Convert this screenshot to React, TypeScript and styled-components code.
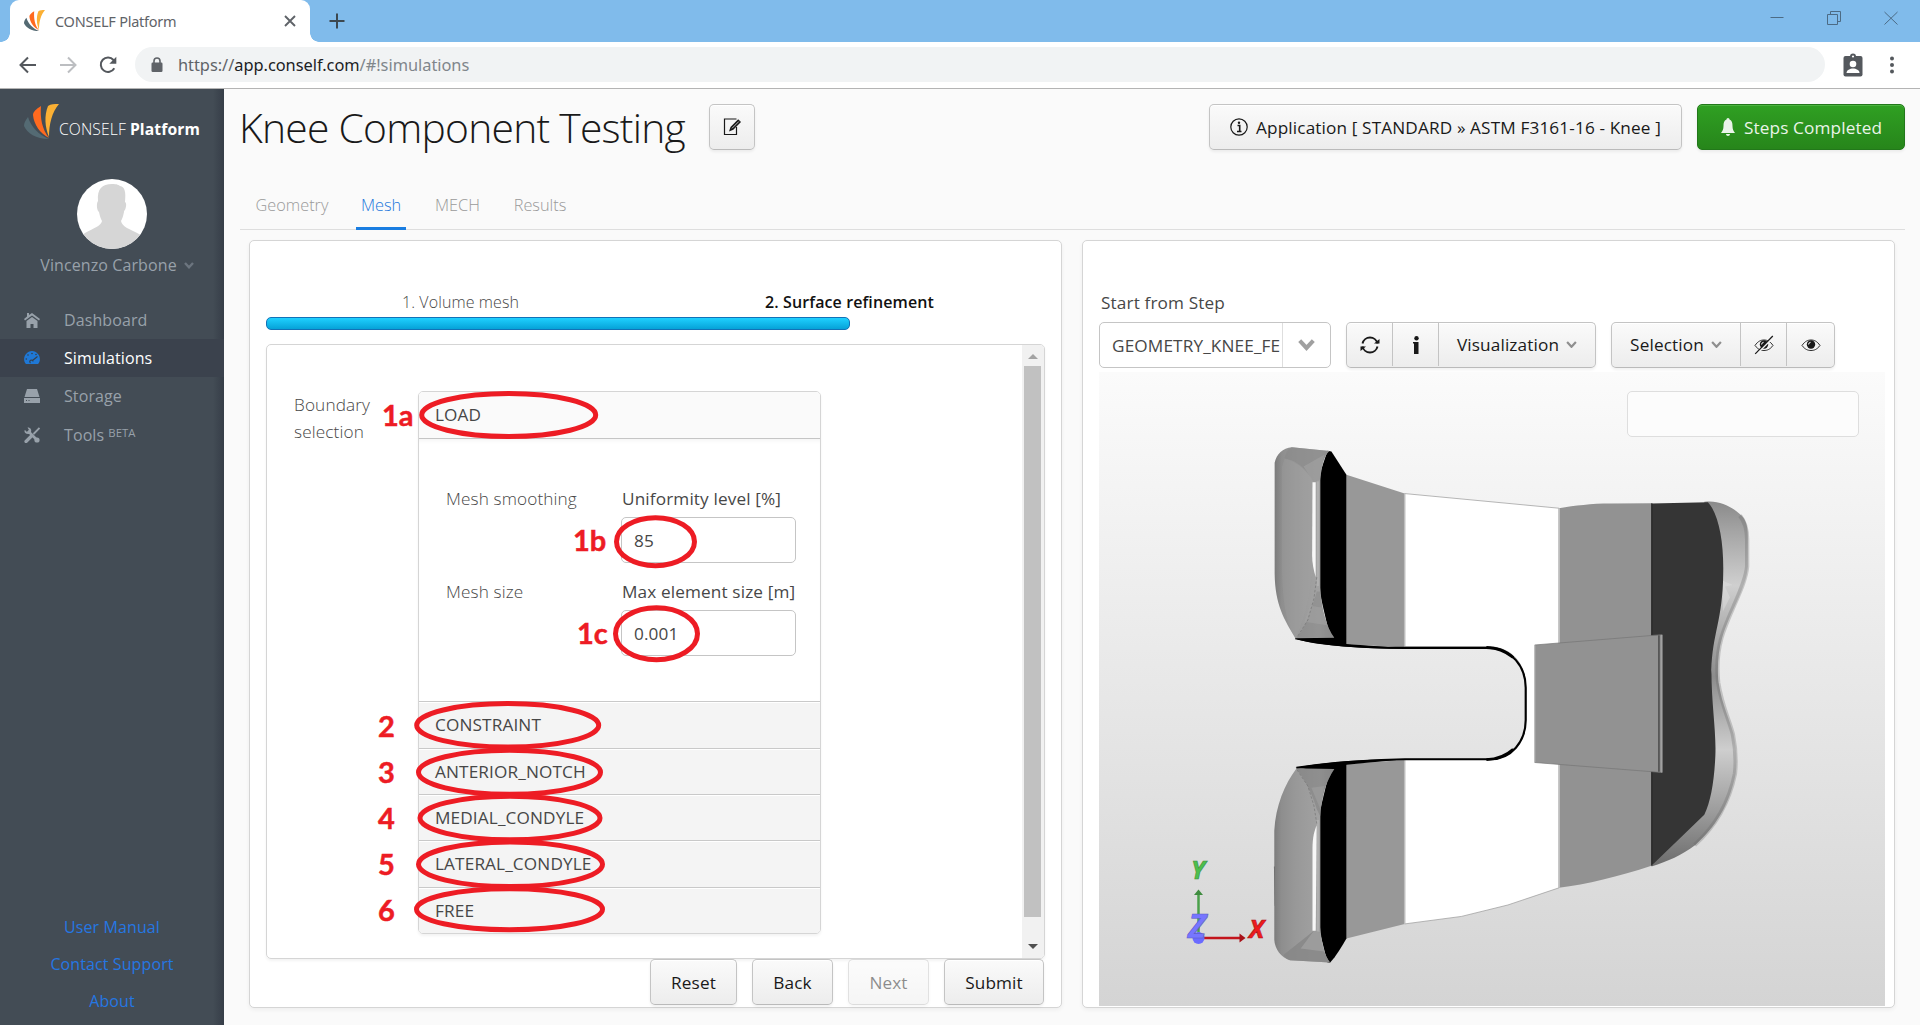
import React from "react";
import styled, { createGlobalStyle, css } from "styled-components";

const Global = createGlobalStyle`
  html, body { margin: 0; padding: 0; overflow: hidden; }
  * { box-sizing: border-box; }
  body { font-family: "Open Sans", "Noto Sans", sans-serif; font-size: 16px; color: #474747; background: #fafafa; }
`;

const Window = styled.div`
  position: relative;
  display: flex;
  flex-direction: column;
  width: 1920px;
  height: 1025px;
  overflow: hidden;
`;

/* ---------- browser chrome ---------- */
const TitleBar = styled.div`
  display: flex;
  align-items: stretch;
  height: 42px;
  padding-left: 10px;
  background: #80bbeb;
`;
const BrowserTab = styled.div`
  position: relative;
  display: flex;
  align-items: center;
  width: 300px;
  padding: 0 14px 1px 14px;
  background: #fff;
  border-radius: 9px 9px 0 0;
  &::before, &::after {
    content: "";
    position: absolute;
    bottom: 0;
    width: 9px;
    height: 9px;
  }
  &::before { left: -9px; background: radial-gradient(circle at 0 0, transparent 8.5px, #fff 9px); }
  &::after { right: -9px; background: radial-gradient(circle at 100% 0, transparent 8.5px, #fff 9px); }
`;
const TabTitle = styled.span`
  flex: 1;
  margin-left: 10px;
  font-family: "Noto Sans", sans-serif;
  font-size: 14.5px;
  letter-spacing: -0.25px;
  color: #5f6368;
`;
const NewTab = styled.div`
  display: flex;
  align-items: center;
  margin-left: 19px;
`;
const WindowButtons = styled.div`
  display: flex;
  align-items: flex-start;
  gap: 43px;
  margin-left: auto;
  padding: 11px 22px 0 0;
`;
const Toolbar = styled.div`
  display: flex;
  align-items: center;
  height: 47px;
  padding: 0 21px 1px 18px;
  background: #fff;
  border-bottom: 1px solid #b4b4b4;
`;
const NavIcons = styled.div`
  display: flex;
  gap: 20px;
  width: 117px;
  align-items: center;
`;
const Omnibox = styled.div`
  display: flex;
  align-items: center;
  flex: 1;
  height: 35px;
  margin-right: 18px;
  padding-left: 16px;
  background: #f1f3f4;
  border-radius: 18px;
  font-family: "Noto Sans", sans-serif;
  font-size: 16.4px;
  letter-spacing: -0.03px;
  color: #80868b;
`;
const Url = styled.span`margin-left: 15px;`;
const UrlPart = styled.span<{ $c: string }>`color: ${(p) => p.$c};`;
const MenuGap = styled.span`display: flex; margin-left: 22px;`;

/* ---------- sidebar ---------- */
const Body = styled.div`
  display: flex;
  flex: 1;
  min-height: 0;
`;
const Sidebar = styled.aside`
  display: flex;
  flex-direction: column;
  width: 224px;
  padding-top: 15px;
  background: linear-gradient(to right, transparent 213px, rgba(45, 52, 63, 0.6) 224px), #434c55;
  color: #98a1aa;
  letter-spacing: 0.1px;
`;
const Brand = styled.div`
  display: flex;
  height: 75px;
  padding-left: 24px;
  color: #fff;
  font-size: 15.7px;
  line-height: 50px;
  white-space: nowrap;
`;
const BrandLight = styled.span`font-weight: 300; margin-right: 4px;`;
const BrandBold = styled.b`font-weight: 700;`;
const Avatar = styled.div`
  width: 70px;
  height: 70px;
  margin: 0 auto;
  border-radius: 50%;
  background: #fff;
  overflow: hidden;
`;
const UserName = styled.div`
  display: flex;
  align-items: center;
  justify-content: center;
  gap: 7px;
  height: 32px;
  margin-bottom: 20px;
  padding-left: 10px;
  font-size: 16px;
`;
const NavItem = styled.div<{ $active?: boolean }>`
  display: flex;
  align-items: center;
  height: ${(p) => (p.$active ? 38 : 38.3)}px;
  padding-left: 24px;
  font-size: 16px;
  color: ${(p) => (p.$active ? "#fff" : "#98a1aa")};
  background: ${(p) => (p.$active ? "#3b424d" : "transparent")};
`;
const NavIcon = styled.span`
  display: flex;
  align-items: center;
  width: 40px;
`;
const Beta = styled.sup`
  margin: -5px 0 0 4px;
  font-size: 11.3px;
  line-height: 1;
`;
const Links = styled.div`
  display: flex;
  flex-direction: column;
  align-items: center;
  margin-top: auto;
  padding-bottom: 5px;
  font-size: 16px;
  line-height: 37px;
  color: #2577e3;
`;

/* ---------- main ---------- */
const Main = styled.main`
  display: flex;
  flex-direction: column;
  flex: 1;
  background: #fafafa;
`;
const Header = styled.header`
  display: flex;
  align-items: center;
  height: 46px;
  margin: 15px 15px 0 15px;
`;
const Title = styled.h1`
  width: 446px;
  margin: 0 24px 0 0;
  font-size: 40.8px;
  font-weight: 300;
  line-height: 47px;
  letter-spacing: -0.75px;
  color: #191919;
  white-space: nowrap;
`;
const raised = css`
  background: linear-gradient(#fafafa 2%, #ededed 98%);
  border: 1px solid #c4c4c4;
  border-bottom-color: #bababa;
  box-shadow: inset 0 1px 0 #fff, 0 2px 3px rgba(0, 0, 0, 0.06);
`;
const formText = css`
  font-size: 17.2px;
  letter-spacing: 0.13px;
`;
const Button = styled.button<{ $w: number; $green?: boolean; $off?: boolean }>`
  display: flex;
  align-items: center;
  justify-content: center;
  gap: 8px;
  flex: none;
  width: ${(p) => p.$w}px;
  height: 46px;
  padding: 0;
  border-radius: 5px;
  font-family: "Open Sans", sans-serif;
  ${formText}
  white-space: nowrap;
  color: #191919;
  ${raised}
  ${(p) => p.$green && css`
    color: #eaf4e9;
    background: linear-gradient(#2f9f22 2%, #27861b 98%);
    border-color: #22781a;
    box-shadow: inset 0 1px 0 #4cb340, 0 2px 3px rgba(0, 0, 0, 0.06);
  `}
  ${(p) => p.$off && "opacity: 0.5;"}
`;
const Spacer = styled.div`flex: 1;`;
const HeadActions = styled.div`display: flex; gap: 15px;`;
const Tabs = styled.nav`
  display: flex;
  height: 56px;
  margin: 24px 15px 0 16px;
  border-bottom: 1px solid #dedede;
  padding: 0 0 0 8px;
`;
const Tab = styled.div<{ $w: number; $active?: boolean }>`
  display: flex;
  justify-content: center;
  width: ${(p) => p.$w}px;
  height: 56px;
  margin-right: 20px;
  font-size: 16.3px;
  font-weight: 300;
  line-height: 62px;
  color: ${(p) => (p.$active ? "#2377dc" : "#999")};
  border-bottom: 3px solid ${(p) => (p.$active ? "#197de1" : "transparent")};
`;
const Columns = styled.div`
  display: flex;
  gap: 20px;
  flex: none;
  margin: 10px 25px 0;
`;
const Card = styled.section`
  display: flex;
  flex-direction: column;
  flex: 1;
  height: 768px;
  background: #fff;
  border: 1px solid #d5d5d5;
  border-radius: 5px;
  box-shadow: 0 2px 4px rgba(0, 0, 0, 0.05);
`;
const Steps = styled.div`
  display: grid;
  grid-template-columns: 1fr 1fr;
  margin: 46px 17px 0 16px;
  line-height: 30px;
  text-align: center;
  font-size: 16px;
  letter-spacing: 0.1px;
`;
const Step = styled.span<{ $active?: boolean }>`
  font-weight: ${(p) => (p.$active ? 600 : 300)};
  color: ${(p) => (p.$active ? "#111" : "#474747")};
`;
const Progress = styled.div`
  width: 584px;
  height: 13px;
  margin: 0 0 14px 16px;
  border: 1px solid #1272b8;
  border-radius: 5px;
  background: linear-gradient(#1fd0ff, #06a2d8);
`;
const ScrollPanel = styled.div`
  display: flex;
  width: 779px;
  height: 615px;
  margin-left: 16px;
  border: 1px solid #d5d5d5;
  border-radius: 5px;
  box-shadow: 0 2px 3px rgba(0, 0, 0, 0.05);
  overflow: hidden;
`;
const FormArea = styled.div`
  display: flex;
  flex: 1;
  padding: 46px 0 0 27px;
`;
const FormCaption = styled.div`
  width: 124px;
  ${formText}
  font-weight: 300;
  line-height: 27px;
`;
const Scrollbar = styled.div`
  display: flex;
  flex-direction: column;
  align-items: center;
  width: 22px;
  padding-right: 1px;
  background: #f1f1f1;
`;
const ScrollArrow = styled.span<{ $down?: boolean }>`
  width: 0;
  height: 0;
  border: 5px solid transparent;
  ${(p) => p.$down
    ? css`border-top-color: #505050; border-bottom: 0; margin-top: 27px;`
    : css`border-bottom-color: #a3a3a3; border-top: 0; margin: 9px 0 7px;`}
`;
const ScrollThumb = styled.div`
  width: 17px;
  height: 551px;
  background: #c1c1c1;
`;
const Accordion = styled.div`
  width: 403px;
  height: 543px;
  border: 1px solid #d5d5d5;
  border-radius: 5px;
  box-shadow: 0 2px 3px rgba(0, 0, 0, 0.05);
  overflow: hidden;
`;
const AccHead = styled.div<{ $h: number; $open?: boolean }>`
  height: ${(p) => p.$h}px;
  padding: 0 0 0 16px;
  ${formText}
  line-height: 45px;
  ${(p) => p.$open
    ? css`background: #fafafa; border-bottom: 1px solid #c5c5c5; line-height: 46px;`
    : css`background: #f4f4f4; border-top: 1px solid #c9c9c9; box-shadow: inset 0 1px 0 #fff;`}
`;
const AccBody = styled.div`
  display: grid;
  grid-template-columns: 175px 175px;
  grid-auto-rows: 93px;
  height: 262px;
  padding: 44px 0 0 27px;
  box-shadow: inset 0 4px 5px -3px rgba(0, 0, 0, 0.06);
`;
const FieldName = styled.div`
  ${formText}
  font-weight: 300;
  line-height: 31px;
`;
const FieldLabel = styled.div`
  padding-left: 1px;
  ${formText}
  line-height: 31px;
  white-space: nowrap;
`;
const Input = styled.div`
  height: 46px;
  margin-top: 3px;
  padding-left: 12px;
  border: 1px solid #c5c5c5;
  border-radius: 5px;
  ${formText}
  line-height: 45px;
`;
const Actions = styled.div`
  display: flex;
  justify-content: flex-end;
  gap: 15px;
  padding-right: 17px;
`;

/* ---------- viewer ---------- */
const ViewerLabel = styled.div`
  margin: 46px 0 3px 18px;
  ${formText}
  line-height: 32px;
`;
const ViewerTools = styled.div`
  display: flex;
  margin-left: 16px;
  height: 50px;
`;
const Combo = styled.div`
  display: flex;
  width: 232px;
  height: 46px;
  margin-right: 15px;
  padding-left: 12px;
  border: 1px solid #c5c5c5;
  border-radius: 5px;
  ${formText}
  line-height: 45px;
  background: #fff;
`;
const ComboText = styled.span`
  width: 171px;
  overflow: hidden;
  white-space: nowrap;
  border-right: 1px solid #dedede;
`;
const ComboArrow = styled.span`
  display: flex;
  flex: 1;
  align-items: center;
  justify-content: center;
`;
const Group = styled.div`
  display: flex;
  height: 46px;
  margin-right: 15px;
  padding-bottom: 1px;
  border-radius: 5px;
  ${raised}
`;
const GroupItem = styled.div<{ $w: number }>`
  display: flex;
  align-items: center;
  justify-content: center;
  gap: 7px;
  width: ${(p) => p.$w}px;
  ${formText}
  color: #191919;
  & + & { border-left: 1px solid #c4c4c4; }
`;
const Canvas = styled.div`
  position: relative;
  width: 786px;
  height: 634px;
  margin-left: 16px;
  background: linear-gradient(#fbfbfb, #d4d4d4);
`;
const Scene = styled.svg`
  display: block;
`;
const InfoBox = styled.div`
  position: absolute;
  left: 528px;
  top: 19px;
  width: 232px;
  height: 46px;
  border: 1px solid #dedede;
  border-radius: 5px;
  background: #fcfcfc;
`;
const Markup = styled.svg`
  position: absolute;
  left: 0;
  top: 0;
  pointer-events: none;
`;

const Logo = ({ size }: { size: number }) => (
  <svg width={size} height={size} viewBox="0 0 35 35">
    <path d="M4 13C1 17 0 19 0 22c3 7 12 13 25 13C15 31 7 23 4 13Z" fill="#546a73" />
    <path d="M17 2C12 5 9 8 9 11c1 10 7 18 16 23-7-9-9-20-8-32Z" fill="#ff6a1f" />
    <path d="M35 0c-5 0-8 0-11 2-4 10-3 21 1 31 0-13 3-25 10-33Z" fill="#fbb034" />
  </svg>
);

const Chevron = ({ s = 10, c = "#8f8f8f", w = 2.4 }: { s?: number; c?: string; w?: number }) => (
  <svg width={s} height={s * 0.7} viewBox="0 0 10 7">
    <path d="M1 1l4 4.3L9 1" fill="none" stroke={c} strokeWidth={w} />
  </svg>
);

const Eye = ({ off }: { off?: boolean }) => (
  <svg width="20" height="20" viewBox="0 0 20 20">
    <path d="M1 10.5C4 6 7 5 10 5s6 1 9 5.500C16 14.500 13 15.500 10 15.500S4 14.500 1 10.500Z" fill="none" stroke="#191919" strokeWidth="0.900" />
    <circle cx="10" cy="9.500" r="4.200" fill="#191919" />
    <path d="M7.600 9.500a2.200 2.200 0 0 1 2-2.200" stroke="#fff" strokeWidth="1" fill="none" />
    {off && (
      <>
        <path d="M2.200 19.600L19.800 1.800" stroke="#f4f4f4" strokeWidth="1.500" />
        <path d="M1.200 18.800L18.800 1" stroke="#191919" strokeWidth="1.200" />
      </>
    )}
  </svg>
);

const RINGS = [
  [508.7, 415, 87, 21.5],
  [655.5, 541.7, 39, 24],
  [656.5, 633.7, 41, 26],
  [507.7, 725.3, 91, 21.7],
  [509.5, 772.3, 91, 22],
  [510, 818, 90, 21.7],
  [510.5, 864.3, 92, 22.3],
  [509.5, 909.3, 93, 20.5],
];
const NOTES: [string, number, number][] = [
  ["1a", 382, 426], ["1b", 573, 551], ["1c", 577, 644],
  ["2", 378, 737], ["3", 378, 783], ["4", 378, 829], ["5", 378, 875], ["6", 378, 921],
];

const Knee = () => (
  <g transform="translate(141 48) scale(0.35714)">
    <defs>
      <linearGradient id="pad" x1="0" x2="1">
        <stop offset="0" stopColor="#7c7c7c" />
        <stop offset="0.120" stopColor="#8e8e8e" />
        <stop offset="0.350" stopColor="#989898" />
        <stop offset="0.750" stopColor="#a2a2a2" />
        <stop offset="1" stopColor="#939393" />
      </linearGradient>
      <linearGradient id="rim" x1="0" x2="0" y1="0" y2="1">
        <stop offset="0" stopColor="#8a8a8a" />
        <stop offset="0.080" stopColor="#a4a4a4" />
        <stop offset="0.230" stopColor="#cfcfcf" />
        <stop offset="0.330" stopColor="#b4b4b4" />
        <stop offset="0.480" stopColor="#8c8c8c" />
        <stop offset="0.680" stopColor="#cecece" />
        <stop offset="0.850" stopColor="#9c9c9c" />
        <stop offset="1" stopColor="#6c6c6c" />
      </linearGradient>
    </defs>
    <path d="M1300 229C1345 223 1380 245 1405 268C1420 285 1422 305 1422 330V410C1418 470 1370 540 1350 610C1338 650 1336 700 1340 735C1350 800 1372 840 1382 880C1390 920 1392 950 1388 990C1370 1080 1330 1140 1275 1190C1235 1220 1200 1235 1152 1250L1290 1000L1320 700Z" fill="url(#rim)" />
    <path d="M1400 268C1418 290 1420 320 1420 335V410C1416 465 1368 540 1348 610C1337 650 1335 700 1339 735C1349 800 1370 840 1380 880C1388 920 1390 950 1386 990C1368 1080 1328 1140 1273 1190" fill="none" stroke="#666" strokeWidth="12" opacity="0.300" />
    <path d="M1352 450l28 12-22 4 14 30-20 40Z" fill="#ddd" opacity="0.500" />
    <path d="M461 206L893 247V1310L750 1358 620 1390 461 1411V950H700C760 945 800 900 800 845V745C798 680 760 637 700 635H461Z" fill="#fff" stroke="#999" strokeWidth="2" />
    <path d="M298 153L461 206V637L298 628Z M298 963L461 952V1411L298 1452Z" fill="#989898" />
    <path d="M893 247C940 240 980 234 1040 234L1152 233V1248C1060 1278 970 1300 893 1310Z" fill="#929292" />
    <path d="M461 206V636M461 952V1411M894 247V1310" stroke="#bdbdbd" strokeWidth="4" />
    <path d="M1152 234L1310 230C1340 262 1355 340 1353 430C1352 560 1322 600 1320 700C1320 800 1334 870 1331 940C1328 1010 1318 1070 1300 1105L1152 1248Z" fill="#353535" />
    <path d="M1153 233V1248" stroke="#202020" strokeWidth="3" />
    <path d="M825 630L1182 601V987L825 959Z" fill="#929292" />
    <path d="M825 630L1182 601V987L825 959" fill="none" stroke="#777" strokeWidth="2" />
    <path d="M1173 603V985" stroke="#555" strokeWidth="5" />
    <path d="M826 631V958M1181 602V987" stroke="#aaa" strokeWidth="3" />
    <path d="M155 611C260 634 360 638 461 638H700C760 640 800 690 800 750V840C800 900 760 950 700 950H461C360 952 250 960 158 974" fill="none" stroke="#000" strokeWidth="6" />
    <path d="M155 611L250 600 298 627 470 640C350 642 190 630 155 611ZM155 974C240 957 340 950 470 949L298 965 250 985Z" fill="#000" />
    <path d="M690 637C720 637 745 648 765 665M690 951C720 950 745 940 765 922" stroke="#000" strokeWidth="8" fill="none" />
    <path d="M245 86L256 88L298 153V630L255 620L220 470V160Z" fill="#000" />
    <path d="M255 965L298 962V1452C285 1475 270 1500 252 1520L245 1519L220 1420V1110Z" fill="#000" />
    <path d="M145 76L250 87C234 100 226 140 225 170V470C228 530 242 580 264 610L155 611C125 560 98 520 97 430V120C102 95 120 78 145 76Z" fill="url(#pad)" />
    <path d="M145 76L250 87C234 100 227 130 224 165L207 174C190 148 170 120 125 108C128 90 135 80 145 76Z" fill="#8a8a8a" opacity="0.700" />
    <path d="M207 174L178 130 236 97 224 165Z" fill="#a4a4a4" opacity="0.600" />
    <path d="M125 108C160 112 190 140 207 174V390C195 480 190 540 155 611C125 560 120 500 118 430V130Z" fill="#a2a2a2" opacity="0.300" />
    <path d="M225 480C228 535 242 580 264 610H158C180 585 195 550 215 480Z" fill="#777" opacity="0.350" />
    <path d="M196 520L229 525 244 575 180 565Z" fill="#a2a2a2" opacity="0.600" />
    <path d="M203 174H212V440C206 420 202 400 202 380Z" fill="#f7f7f7" />
    <path d="M218 172V465" stroke="#b4b4b4" strokeWidth="6" opacity="0.800" />
    <path d="M215 440L207 500 190 560 160 608" fill="none" stroke="#777" strokeWidth="2" strokeDasharray="7 5" />
    <path d="M95 1250H100V1360H97Z" fill="#555" />
    <path d="M158 976L264 977C242 1010 228 1050 225 1110V1420C228 1470 238 1500 252 1519L140 1513C115 1505 97 1480 96 1455V1150C100 1080 125 1020 158 976Z" fill="url(#pad)" />
    <path d="M252 1519L140 1513C125 1505 118 1500 125 1495L207 1430 224 1435C227 1470 238 1500 252 1519Z" fill="#868686" opacity="0.800" />
    <path d="M207 1430L170 1480 236 1488 224 1435Z" fill="#a4a4a4" opacity="0.700" />
    <path d="M158 976L264 977C242 1010 228 1050 225 1110L215 1090C200 1040 180 1005 158 976Z" fill="#727272" opacity="0.400" />
    <path d="M200 1030L236 1025 225 1090Z" fill="#a0a0a0" opacity="0.600" />
    <path d="M215 1135L212 1430H203V1200C203 1170 208 1150 215 1135Z" fill="#f7f7f7" />
    <path d="M218 1120V1432" stroke="#b4b4b4" strokeWidth="6" opacity="0.800" />
    <path d="M160 980L190 1025 207 1080 215 1130" fill="none" stroke="#777" strokeWidth="2" strokeDasharray="7 5" />
  </g>
);

const Triad = styled.text<{ $s?: number }>`
  font-family: "Open Sans", sans-serif;
  font-weight: 700;
  font-style: italic;
  font-size: ${(p) => p.$s ?? 25}px;
  stroke-width: 0.6px;
`;

const MarkupText = styled.text`
  font-family: Lato, sans-serif;
  font-weight: 700;
  font-size: 29px;
  fill: #ed1c24;
  stroke: #ed1c24;
  stroke-width: 0.5px;
`;

export default function App() {
  return (
    <Window>
      <Global />
      <TitleBar>
        <BrowserTab>
          <Logo size={21} />
          <TabTitle>CONSELF Platform</TabTitle>
          <svg width="12" height="12" viewBox="0 0 12 12"><path d="M1 1l10 10M11 1L1 11" stroke="#5f6368" strokeWidth="1.900" /></svg>
        </BrowserTab>
        <NewTab>
          <svg width="16" height="16" viewBox="0 0 16 16"><path d="M8 0.500v15M0.500 8h15" stroke="#3c4850" strokeWidth="2" /></svg>
        </NewTab>
        <WindowButtons>
          <svg width="14" height="14"><path d="M0.500 6.500h13" stroke="#4c6b85" /></svg>
          <svg width="14" height="14"><path d="M0.500 3.500h10v10h-10zM3.500 3.500v-3h10v10h-3" fill="none" stroke="#4c6b85" /></svg>
          <svg width="14" height="14"><path d="M0.500 1l13 12.500M13.500 1l-13 12.500" stroke="#4c6b85" /></svg>
        </WindowButtons>
      </TitleBar>
      <Toolbar>
        <NavIcons>
          <svg width="20" height="20" viewBox="0 0 20 20"><path d="M18 10H3M10 2.500L2.500 10l7.500 7.500" fill="none" stroke="#54585d" strokeWidth="2" /></svg>
          <svg width="20" height="20" viewBox="0 0 20 20"><path d="M2 10h15M10 2.500l7.500 7.500-7.500 7.500" fill="none" stroke="#bcbec1" strokeWidth="2" /></svg>
          <svg width="20" height="20" viewBox="0 0 20 20"><path d="M16.300 13.200A7.200 7.200 0 1 1 15.500 5l2 2" fill="none" stroke="#54585d" strokeWidth="2" /><path d="M18.300 1.800v7h-7z" fill="#54585d" /></svg>
        </NavIcons>
        <Omnibox>
          <svg width="12" height="16" viewBox="0 0 12 16"><rect x="0.500" y="5.500" width="11" height="9.500" rx="1.200" fill="#5f6368" /><path d="M3 6V4a3 3 0 0 1 6 0v2" fill="none" stroke="#5f6368" strokeWidth="1.600" /></svg>
          <Url>
            <UrlPart $c="#5f6368">https://</UrlPart><UrlPart $c="#202124">app.conself.com</UrlPart><UrlPart $c="#80868b">/#!simulations</UrlPart>
          </Url>
        </Omnibox>
        <svg width="20" height="24" viewBox="0 0 20 24">
          <rect x="0.500" y="3" width="19" height="20.500" rx="2" fill="#54585d" />
          <circle cx="10" cy="3.500" r="3" fill="#54585d" /><circle cx="10" cy="3.500" r="1.100" fill="#fff" />
          <circle cx="10" cy="11" r="3.300" fill="#fff" /><path d="M3.500 20c0-3 3.500-4.500 6.500-4.500s6.500 1.500 6.500 4.500z" fill="#fff" />
        </svg>
        <MenuGap>
          <svg width="14" height="18" viewBox="0 0 14 18"><g fill="#54585d"><circle cx="7" cy="2.500" r="2" /><circle cx="7" cy="9" r="2" /><circle cx="7" cy="15.500" r="2" /></g></svg>
        </MenuGap>
      </Toolbar>
      <Body>
        <Sidebar>
          <Brand>
            <Logo size={35} />
            <BrandLight>CONSELF</BrandLight>
            <BrandBold>Platform</BrandBold>
          </Brand>
          <Avatar>
            <svg width="70" height="70" viewBox="0 0 70 70">
              <path d="M21 22C20 10 25 5 35 5c5 0 7 1 8 2 5 1 6 6 5 16 2 1 1 6 0 8-1 1-1 1-1 2-1 5-2 7-3 9 1 6 9 8 18 13l8 5v10H0V60l8-6c9-5 16-7 17-12-1-2-2-4-3-9-2-1-3-8-1-11Z" fill="#d6d6d6" />
            </svg>
          </Avatar>
          <UserName>Vincenzo Carbone <Chevron c="#6c757f" /></UserName>
          <NavItem>
            <NavIcon>
              <svg width="16" height="15" viewBox="0 0 16 15"><path d="M3 0h2v2L8 0l8 6-1 1.500L8 2.500 1 7.500 0 6l3-2.500z" fill="#98a1aa" /><path d="M2.500 8L8 4l5.500 4v7H9.500v-4h-3v4h-4z" fill="#98a1aa" /></svg>
            </NavIcon>
            Dashboard
          </NavItem>
          <NavItem $active>
            <NavIcon>
              <svg width="16" height="14" viewBox="0 0 16 14"><path d="M2 13C-1 10 0 5 2 3c3-4 9-4 12 0 2 2 3 7 0 10z" fill="#1f78d6" /><path d="M6.500 12a1.600 1.600 0 1 1 2.500-1.500M8.500 9.500L13.500 5.500" stroke="#36404c" strokeWidth="1.200" fill="none" /><g fill="#36404c"><circle cx="8" cy="2.500" r="0.800" /><circle cx="4" cy="4" r="0.800" /><circle cx="12" cy="3.500" r="0.800" /><circle cx="2.300" cy="8" r="0.800" /></g></svg>
            </NavIcon>
            Simulations
          </NavItem>
          <NavItem>
            <NavIcon>
              <svg width="16" height="14" viewBox="0 0 16 14"><path d="M3 0h10l2.500 8H0.500z" fill="#98a1aa" /><path d="M0 9h16v5H0z" fill="#98a1aa" /><path d="M2 11.500h1M4.500 11.500h1" stroke="#434c55" /></svg>
            </NavIcon>
            Storage
          </NavItem>
          <NavItem>
            <NavIcon>
              <svg width="16" height="16" viewBox="0 0 16 16"><path d="M4 4l8.500 8.500" stroke="#98a1aa" strokeWidth="2.600" /><circle cx="13" cy="13" r="2.600" fill="#98a1aa" /><path d="M1 3l2 2 2-2L3.500 0.500C6 0 8 2.500 7 5L5 7C2.500 7.500 0 6 0.500 3.500z" fill="#98a1aa" /><path d="M15.500 1L9.500 7" stroke="#98a1aa" strokeWidth="1.800" /><path d="M8 8.500L2 14.500" stroke="#98a1aa" strokeWidth="3.200" strokeLinecap="round" /></svg>
            </NavIcon>
            Tools<Beta>BETA</Beta>
          </NavItem>
          <Links>
            <span>User Manual</span>
            <span>Contact Support</span>
            <span>About</span>
          </Links>
        </Sidebar>
        <Main>
          <Header>
            <Title>Knee Component Testing</Title>
            <Button $w={46}>
              <svg width="20" height="20" viewBox="0 0 20 20"><path d="M14.500 10v7.500H2.500V2h12" fill="none" stroke="#191919" strokeWidth="1.200" /><path d="M7 14.500L8.500 10 16.200 2.200 19 5 11.300 12.800z" fill="#191919" /><path d="M10 11.300L16.800 4.500" stroke="#ccc" strokeWidth="0.900" /></svg>
            </Button>
            <Spacer />
            <HeadActions>
              <Button $w={473}>
                <svg width="18" height="18" viewBox="0 0 18 18"><circle cx="9" cy="9" r="8.200" fill="none" stroke="#191919" strokeWidth="1.200" /><path d="M7.500 7.500H9.700V13.500M7 13.500h4.500" stroke="#191919" strokeWidth="1.600" fill="none" /><circle cx="9" cy="4.800" r="1.200" fill="#191919" /></svg>
                Application [ STANDARD » ASTM F3161-16 - Knee ]
              </Button>
              <Button $w={208} $green>
                <svg width="16" height="18" viewBox="-1 0 16 18"><path d="M7 0c1 0 1.500 0.800 1.500 1.500C11 2.500 11.500 5 11.500 8c0 3.500 1 5 2.500 7H0c1.500-2 2.500-3.500 2.500-7 0-3 0.500-5.500 3-6.500C5.500 0.800 6 0 7 0ZM5 16h4c0 1-1 2-2 2s-2-1-2-2Z" fill="#eaf4e9" /></svg>
                Steps Completed
              </Button>
            </HeadActions>
          </Header>
          <Tabs>
            <Tab $w={88}>Geometry</Tab>
            <Tab $w={50} $active>Mesh</Tab>
            <Tab $w={63}>MECH</Tab>
            <Tab $w={62}>Results</Tab>
          </Tabs>
          <Columns>
            <Card>
              <Steps>
                <Step>1. Volume mesh</Step>
                <Step $active>2. Surface refinement</Step>
              </Steps>
              <Progress />
              <ScrollPanel>
                <FormArea>
                  <FormCaption>Boundary<br />selection</FormCaption>
                  <Accordion>
                    <AccHead $h={47} $open>LOAD</AccHead>
                    <AccBody>
                      <FieldName>Mesh smoothing</FieldName>
                      <div>
                        <FieldLabel>Uniformity level [%]</FieldLabel>
                        <Input>85</Input>
                      </div>
                      <FieldName>Mesh size</FieldName>
                      <div>
                        <FieldLabel>Max element size [m]</FieldLabel>
                        <Input>0.001</Input>
                      </div>
                    </AccBody>
                    <AccHead $h={47}>CONSTRAINT</AccHead>
                    <AccHead $h={46}>ANTERIOR_NOTCH</AccHead>
                    <AccHead $h={46}>MEDIAL_CONDYLE</AccHead>
                    <AccHead $h={47}>LATERAL_CONDYLE</AccHead>
                    <AccHead $h={47}>FREE</AccHead>
                  </Accordion>
                </FormArea>
                <Scrollbar>
                  <ScrollArrow />
                  <ScrollThumb />
                  <ScrollArrow $down />
                </Scrollbar>
              </ScrollPanel>
              <Actions>
                <Button $w={87}>Reset</Button>
                <Button $w={81}>Back</Button>
                <Button $w={81} $off>Next</Button>
                <Button $w={100}>Submit</Button>
              </Actions>
            </Card>
            <Card>
              <ViewerLabel>Start from Step</ViewerLabel>
              <ViewerTools>
                <Combo>
                  <ComboText>GEOMETRY_KNEE_FE</ComboText>
                  <ComboArrow><Chevron s={17} c="#a0a0a0" /></ComboArrow>
                </Combo>
                <Group>
                  <GroupItem $w={45}>
                    <svg width="20" height="20" viewBox="0 0 20 20"><path d="M2.500 8.500a7.700 7.700 0 0 1 15 0M17.500 11.500a7.700 7.700 0 0 1-15 0" fill="none" stroke="#191919" strokeWidth="1.900" /><path d="M14 8.500h5.500V4zM6 11.500H0.500V16z" fill="#191919" /></svg>
                  </GroupItem>
                  <GroupItem $w={46}>
                    <svg width="8" height="18" viewBox="0 0 8 18"><circle cx="4.500" cy="2.200" r="2.200" fill="#191919" /><path d="M1 6h5.500v12H2V7.500H1z" fill="#191919" /></svg>
                  </GroupItem>
                  <GroupItem $w={157}>Visualization <Chevron s={11} w={2} /></GroupItem>
                </Group>
                <Group>
                  <GroupItem $w={128}>Selection <Chevron s={11} w={2} /></GroupItem>
                  <GroupItem $w={46}><Eye off /></GroupItem>
                  <GroupItem $w={48}><Eye /></GroupItem>
                </Group>
              </ViewerTools>
              <Canvas>
                <Scene width="786" height="634">
                  <Knee />
                  <path d="M99.500 562V523" stroke="#4aa04a" strokeWidth="2.500" />
                  <path d="M95 523l4.500-5.500L104 523z" fill="#3f8c3f" />
                  <path d="M104 566h37" stroke="#c3141c" strokeWidth="2.500" />
                  <path d="M140.500 561.500l6 4.500-6 4.500z" fill="#a81018" />
                  <circle cx="99.500" cy="566" r="6" fill="#6b6bff" />
                  <Triad x="92" y="507" fill="#4cc04c" stroke="#3f8c3f">Y</Triad>
                  <Triad x="150" y="566" fill="#ee1c1c" stroke="#a81018">X</Triad>
                  <Triad $s={34} x="89" y="566" fill="#7676ff" stroke="#5a5ac0">Z</Triad>
                </Scene>
                <InfoBox />
              </Canvas>
            </Card>
          </Columns>
        </Main>
      </Body>
      <Markup width="1920" height="1025">
        {RINGS.map(([cx, cy, rx, ry]) => (
          <ellipse key={cy} cx={cx} cy={cy} rx={rx} ry={ry} fill="none" stroke="#ed1c24" strokeWidth="5" />
        ))}
        {NOTES.map(([t, x, y]) => (
          <MarkupText key={t} x={x} y={y}>{t}</MarkupText>
        ))}
      </Markup>
    </Window>
  );
}
